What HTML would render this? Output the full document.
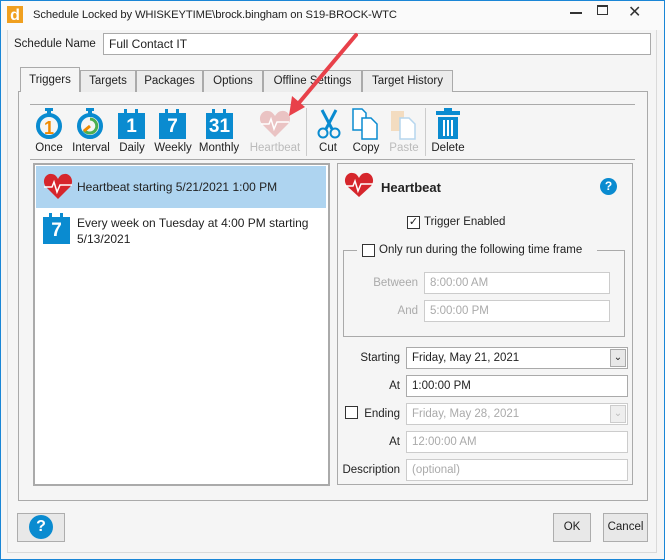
<!DOCTYPE html>
<html><head><meta charset="utf-8"><style>
*{margin:0;padding:0;box-sizing:border-box}
body{width:665px;height:560px;overflow:hidden;background:#fff;font-family:"Liberation Sans",sans-serif;font-size:11.5px;color:#222;position:relative}
.a{position:absolute}
.win{left:0;top:0;width:665px;height:560px;border:1px solid #1a86d6;background:#f5f5f5}
.tb{left:1px;top:1px;width:663px;height:29px;background:#fafafa}
.inner{left:7px;top:30px;width:650px;height:523px;border:1px solid #dadada;border-top:none}
.box{background:#fff;border:1px solid #aaa}
.tab{top:70px;height:22px;border:1px solid #aaa;border-bottom:none;background:#ececec;text-align:center;line-height:20px;font-size:11.5px}
.lbl{font-size:11.5px;text-align:center;width:50px;top:142px}
.cal{width:27px;height:26px;background:#0a8bd0;color:#fff;font-weight:bold;font-size:19px;text-align:center;line-height:28px;top:113px}
.cal:before{content:"";position:absolute;left:6px;top:-4px;width:3px;height:6px;background:#0a8bd0;box-shadow:11px 0 0 #0a8bd0}
.tx{height:22px;border:1px solid #aaa;background:#fff;padding-left:5px;line-height:20px}
.dis{color:#aaa;border-color:#ccc}
.rl{text-align:right;line-height:22px}
.cb{width:13px;height:13px;border:1px solid #333;background:#fff}
.btn{border:1px solid #adadad;background:#e8e8e8;text-align:center;line-height:27px}
</style></head><body>
<div class="a win"></div>
<div class="a tb"></div>
<div class="a" style="left:7px;top:6px;width:16px;height:17px;background:#f0a020;color:#fff;font-weight:bold;font-size:16px;line-height:19px;text-align:center">d</div>
<div class="a" style="left:33px;top:9px;font-size:11.2px;letter-spacing:-0.1px">Schedule Locked by WHISKEYTIME\brock.bingham on S19-BROCK-WTC</div>
<div class="a" style="left:570px;top:12px;width:12px;height:2px;background:#333"></div>
<div class="a" style="left:597px;top:5px;width:11px;height:10px;border:1px solid #333;border-top-width:2px"></div>
<div class="a" style="left:628px;top:2px;font-size:16px;color:#333">✕</div>
<div class="a inner"></div>
<div class="a" style="left:14px;top:38px;font-size:11.5px">Schedule Name</div>
<div class="a box" style="left:103px;top:33px;width:548px;height:22px;padding-left:5px;line-height:20px;font-size:12px">Full Contact IT</div>

<div class="a" style="left:18px;top:91px;width:630px;height:410px;border:1px solid #aaa;background:#f5f5f5"></div>
<div class="a tab" style="left:20px;top:67px;width:60px;height:25px;background:#f5f5f5;line-height:25px">Triggers</div>
<div class="a tab" style="left:80px;width:56px">Targets</div>
<div class="a tab" style="left:136px;width:67px">Packages</div>
<div class="a tab" style="left:203px;width:60px">Options</div>
<div class="a tab" style="left:263px;width:99px">Offline Settings</div>
<div class="a tab" style="left:362px;width:91px">Target History</div>

<div class="a" style="left:30px;top:104px;width:605px;height:1px;background:#aaa"></div>
<div class="a" style="left:30px;top:159px;width:605px;height:1px;background:#aaa"></div>
<div class="a" style="left:306px;top:108px;width:1px;height:48px;background:#ccc"></div>
<div class="a" style="left:425px;top:108px;width:1px;height:48px;background:#ccc"></div>

<svg class="a" style="left:35px;top:108px" width="28" height="32"><rect x="10" y="0" width="8" height="3" fill="#0a8bd0"/><rect x="12" y="2" width="4" height="4" fill="#0a8bd0"/><circle cx="14" cy="18" r="11" fill="none" stroke="#0a8bd0" stroke-width="4"/><text x="14" y="26" font-size="18" font-weight="bold" fill="#f08a00" text-anchor="middle" font-family="Liberation Sans">1</text></svg>
<svg class="a" style="left:76px;top:108px" width="28" height="32"><rect x="10" y="0" width="8" height="3" fill="#0a8bd0"/><rect x="12" y="2" width="4" height="4" fill="#0a8bd0"/><circle cx="14" cy="18" r="11" fill="none" stroke="#0a8bd0" stroke-width="4"/><path d="M14 11 A7 7 0 1 1 8 22" fill="none" stroke="#4caf50" stroke-width="3"/><path d="M14 18 L8 23" stroke="#f08a00" stroke-width="3"/></svg>
<div class="a cal" style="left:118px">1</div>
<div class="a cal" style="left:159px">7</div>
<div class="a cal" style="left:206px">31</div>
<svg class="a" style="left:259px;top:110px" width="32" height="28"><path d="M16 27 L3 14 C-2 8 3 0 9 1 C12 1 14 3 16 6 C18 3 20 1 23 1 C29 0 34 8 29 14 Z" fill="#eac3c3"/><path d="M2 14 H10 L12 9 L15 19 L18 12 H30" fill="none" stroke="#fff" stroke-width="1.5"/></svg>
<svg class="a" style="left:316px;top:109px" width="26" height="30"><path d="M6 1 L16 20 M20 1 L10 20" stroke="#0a8bd0" stroke-width="3"/><circle cx="7" cy="24" r="4.5" fill="none" stroke="#0a8bd0" stroke-width="2"/><circle cx="19" cy="24" r="4.5" fill="none" stroke="#0a8bd0" stroke-width="2"/></svg>
<svg class="a" style="left:352px;top:108px" width="28" height="32"><path d="M1 1 H10 L14 5 V22 H1 Z" fill="#fff" stroke="#0a8bd0" stroke-width="1.5"/><path d="M10 10 H19 L25 16 V31 H10 Z" fill="#fff" stroke="#0a8bd0" stroke-width="1.5"/></svg>
<svg class="a" style="left:390px;top:108px" width="28" height="32"><rect x="1" y="3" width="13" height="20" fill="#f3dcc0"/><path d="M10 10 H19 L25 16 V31 H10 Z" fill="#fff" stroke="#b6d6ee" stroke-width="1.5"/></svg>
<svg class="a" style="left:435px;top:108px" width="26" height="32"><rect x="9" y="0" width="8" height="3" fill="#0a8bd0"/><rect x="1" y="3" width="24" height="4" fill="#0a8bd0"/><rect x="3" y="9" width="20" height="22" fill="#0a8bd0"/><path d="M9 12 V28 M13 12 V28 M17 12 V28" stroke="#fff" stroke-width="2"/></svg>

<div class="a lbl" style="left:24px">Once</div>
<div class="a lbl" style="left:66px">Interval</div>
<div class="a lbl" style="left:107px">Daily</div>
<div class="a lbl" style="left:148px">Weekly</div>
<div class="a lbl" style="left:194px">Monthly</div>
<div class="a lbl" style="left:246px;width:58px;color:#bbb">Heartbeat</div>
<div class="a lbl" style="left:303px">Cut</div>
<div class="a lbl" style="left:341px">Copy</div>
<div class="a lbl" style="left:379px;color:#bbb">Paste</div>
<div class="a lbl" style="left:423px">Delete</div>

<div class="a box" style="left:33px;top:163px;width:297px;height:323px;border-width:2px;border-color:#aaa"></div>
<div class="a" style="left:36px;top:166px;width:290px;height:42px;background:#aed4f0"></div>
<svg class="a" style="left:43px;top:173px" width="30" height="27"><path d="M15 26 L3 14 C-2 8 3 0 8.5 1 C11.5 1 13.5 3 15 6 C16.5 3 18.5 1 21.5 1 C27 0 32 8 27 14 Z" fill="#d6262c"/><path d="M1 14 H9 L11 9 L14 19 L17 12 H29" fill="none" stroke="#fff" stroke-width="1.5"/></svg>
<div class="a" style="left:77px;top:180px;font-size:12px">Heartbeat starting 5/21/2021 1:00 PM</div>
<div class="a cal" style="left:43px;top:217px;height:27px">7</div>
<div class="a" style="left:77px;top:215px;font-size:12px;line-height:16px">Every week on Tuesday at 4:00 PM starting<br>5/13/2021</div>

<div class="a" style="left:337px;top:163px;width:296px;height:322px;border:1px solid #aaa"></div>
<svg class="a" style="left:344px;top:172px" width="30" height="26"><path d="M15 25 L3 14 C-2 8 3 0 8.5 1 C11.5 1 13.5 3 15 6 C16.5 3 18.5 1 21.5 1 C27 0 32 8 27 14 Z" fill="#d6262c"/><path d="M1 14 H9 L11 9 L14 19 L17 12 H29" fill="none" stroke="#fff" stroke-width="1.5"/></svg>
<div class="a" style="left:381px;top:180px;font-weight:bold;font-size:13px">Heartbeat</div>
<div class="a" style="left:600px;top:178px;width:17px;height:17px;border-radius:50%;background:#0a8bd0;color:#fff;font-weight:bold;font-size:12px;text-align:center;line-height:17px">?</div>
<div class="a cb" style="left:407px;top:216px;font-size:11px;line-height:11px;text-align:center">✓</div>
<div class="a" style="left:424px;top:216px">Trigger Enabled</div>
<div class="a" style="left:343px;top:250px;width:282px;height:87px;border:1px solid #aaa"></div>
<div class="a" style="left:357px;top:242px;width:240px;height:16px;background:#f5f5f5"></div>
<div class="a cb" style="left:362px;top:244px"></div>
<div class="a" style="left:379px;top:244px">Only run during the following time frame</div>
<div class="a rl" style="left:350px;top:272px;width:68px;color:#aaa">Between</div>
<div class="a tx dis" style="left:424px;top:272px;width:186px">8:00:00 AM</div>
<div class="a rl" style="left:350px;top:300px;width:68px;color:#aaa">And</div>
<div class="a tx dis" style="left:424px;top:300px;width:186px">5:00:00 PM</div>

<div class="a rl" style="left:340px;top:347px;width:60px">Starting</div>
<div class="a tx" style="left:406px;top:347px;width:222px">Friday, May 21, 2021</div>
<div class="a" style="left:610px;top:349px;width:16px;height:18px;border:1px solid #aaa;background:#e8e8e8;text-align:center;line-height:16px;font-size:10px">⌄</div>
<div class="a rl" style="left:340px;top:375px;width:60px">At</div>
<div class="a tx" style="left:406px;top:375px;width:222px">1:00:00 PM</div>
<div class="a cb" style="left:345px;top:406px"></div>
<div class="a rl" style="left:340px;top:403px;width:60px">Ending</div>
<div class="a tx dis" style="left:406px;top:403px;width:222px">Friday, May 28, 2021</div>
<div class="a" style="left:610px;top:405px;width:16px;height:18px;border:1px solid #ccc;background:#eee;text-align:center;line-height:16px;font-size:10px;color:#bbb">⌄</div>
<div class="a rl" style="left:340px;top:431px;width:60px">At</div>
<div class="a tx dis" style="left:406px;top:431px;width:222px">12:00:00 AM</div>
<div class="a rl" style="left:320px;top:459px;width:80px">Description</div>
<div class="a tx dis" style="left:406px;top:459px;width:222px">(optional)</div>

<div class="a btn" style="left:17px;top:513px;width:48px;height:29px"></div>
<div class="a" style="left:29px;top:515px;width:24px;height:24px;border-radius:50%;background:#0a8bd0;color:#fff;font-weight:bold;font-size:16px;text-align:center;line-height:24px">?</div>
<div class="a btn" style="left:553px;top:513px;width:38px;height:29px">OK</div>
<div class="a btn" style="left:603px;top:513px;width:45px;height:29px">Cancel</div>

<svg class="a" style="left:0;top:0" width="665" height="560"><line x1="356" y1="35" x2="298" y2="104" stroke="#e8414a" stroke-width="4" stroke-linecap="round"/><polygon points="289,116 292,96 305,107" fill="#e8414a"/></svg>
</body></html>
